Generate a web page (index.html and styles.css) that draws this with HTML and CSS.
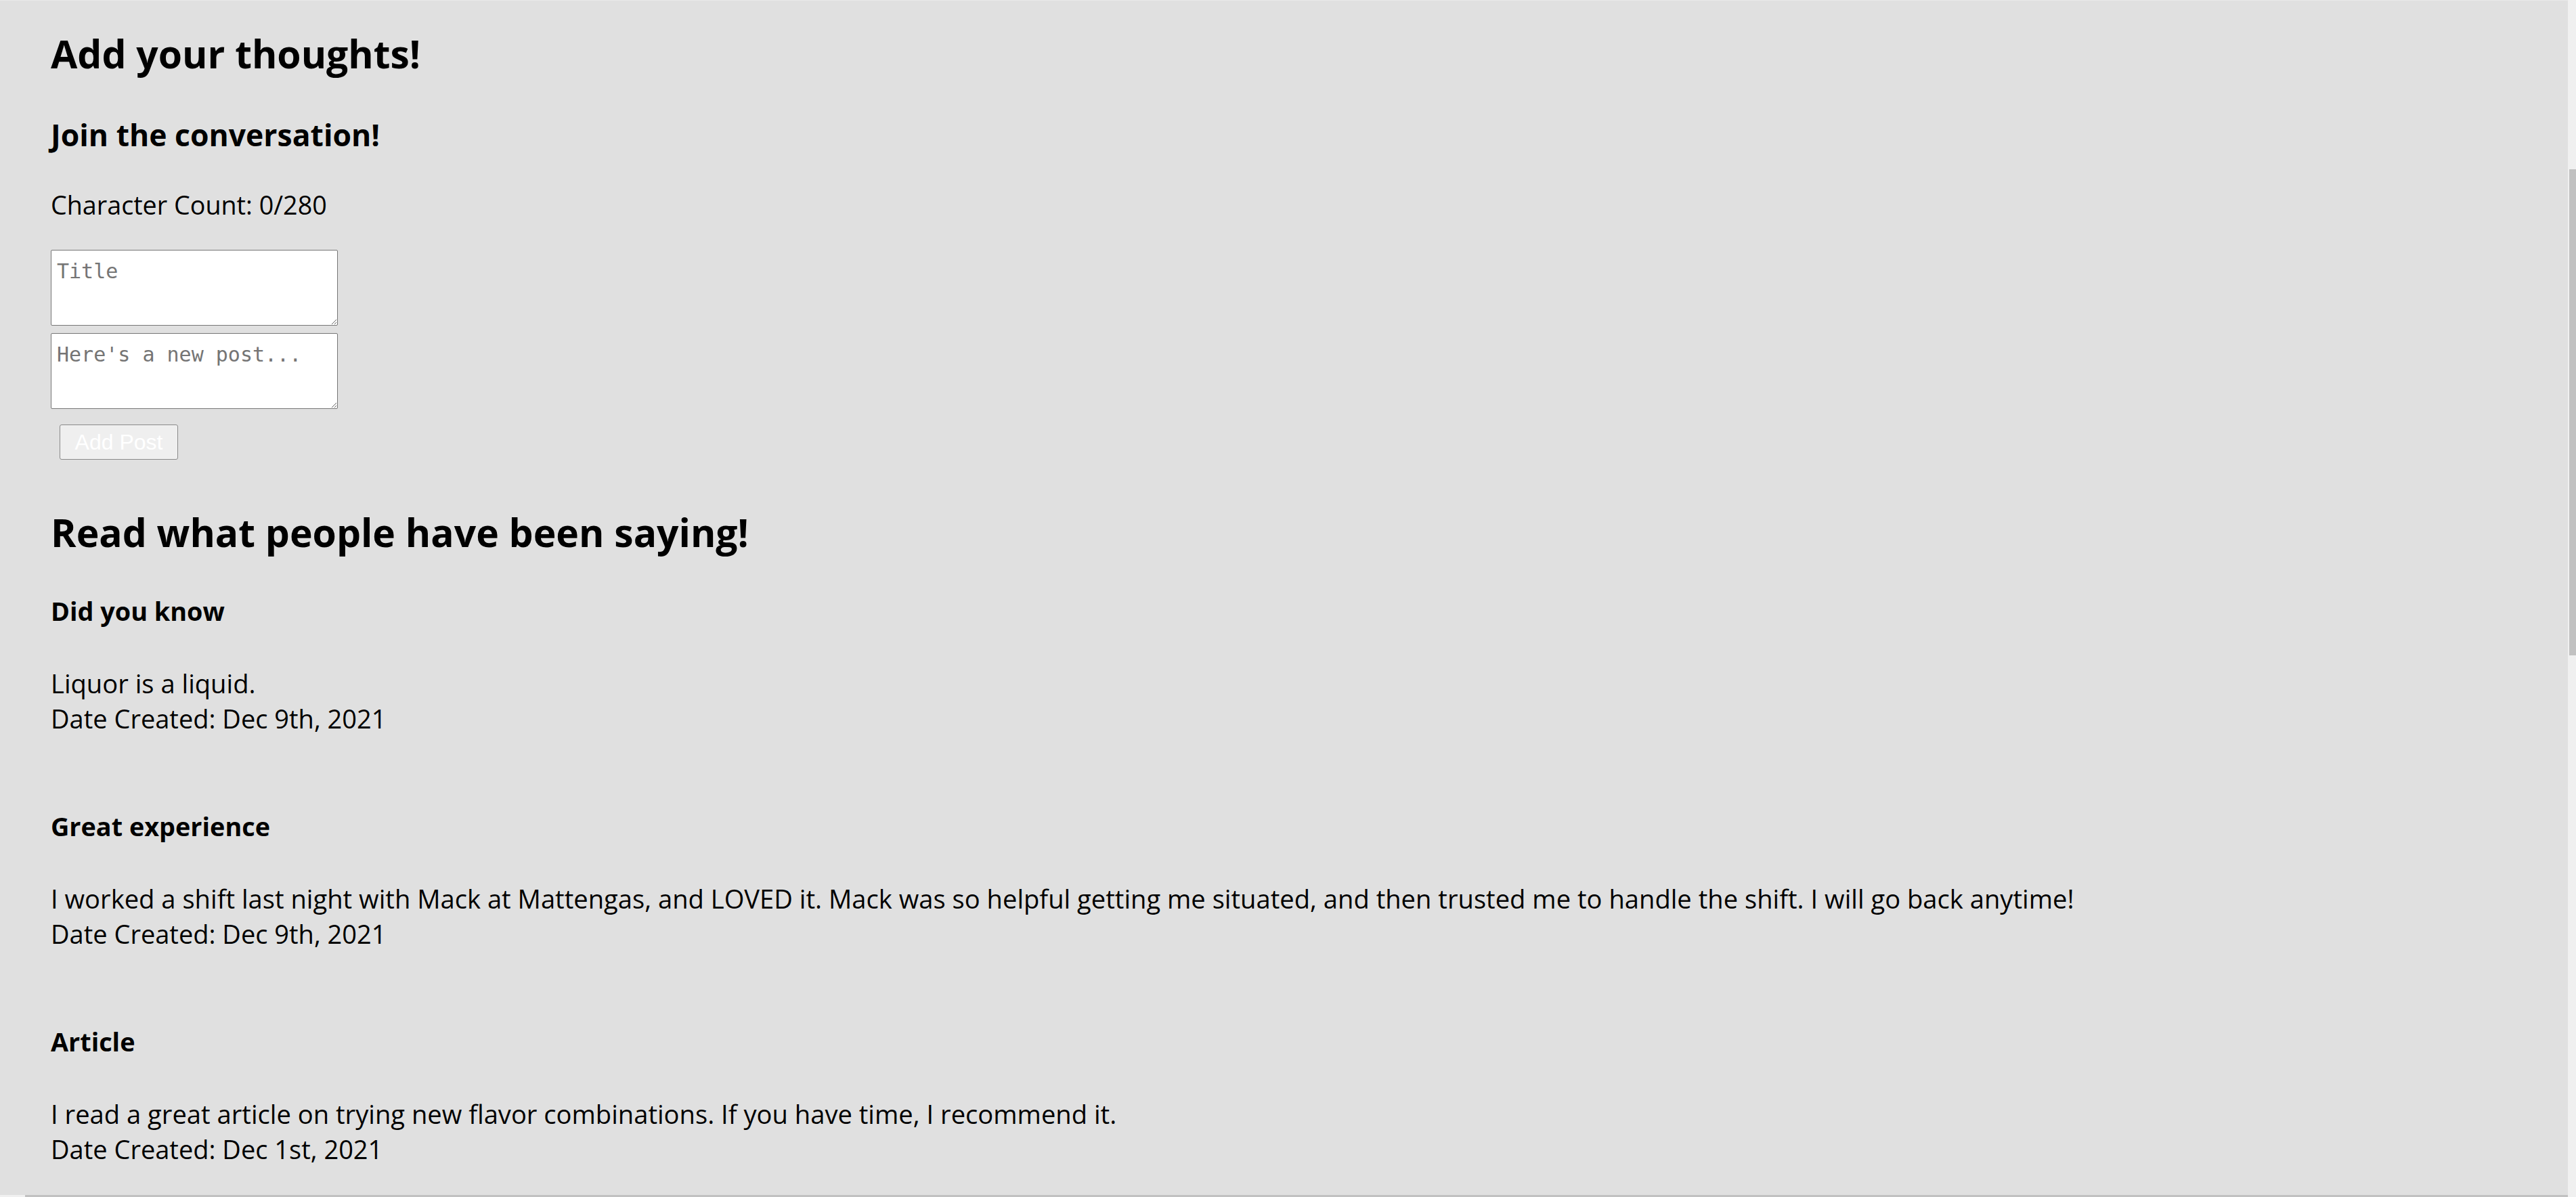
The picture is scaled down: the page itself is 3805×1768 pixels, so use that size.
FILE: index.html
```html
<!DOCTYPE html>
<html lang="en">
<head>
<meta charset="utf-8">
<title>Add your thoughts!</title>
<link rel="stylesheet" href="styles.css">
</head>
<body>
<div class="page">
  <main class="content">
    <h1 class="heading">Add your thoughts!</h1>
    <h2 class="subheading">Join the conversation!</h2>
    <p class="count">Character Count: 0/280</p>
    <form class="post-form">
      <textarea class="field" placeholder="Title"></textarea>
      <textarea class="field field-second" placeholder="Here's a new post..."></textarea>
      <button class="add-btn" type="button" disabled>Add Post</button>
    </form>
    <h1 class="heading heading-read">Read what people have been saying!</h1>
    <section class="posts">
      <article class="post">
        <h4 class="post-title">Did you know</h4>
        <p class="post-body">Liquor is a liquid.</p>
        <p class="post-date">Date Created: Dec 9th, 2021</p>
      </article>
      <article class="post">
        <h4 class="post-title">Great experience</h4>
        <p class="post-body">I worked a shift last night with Mack at Mattengas, and LOVED it. Mack was so helpful getting me situated, and then trusted me to handle the shift. I will go back anytime!</p>
        <p class="post-date">Date Created: Dec 9th, 2021</p>
      </article>
      <article class="post">
        <h4 class="post-title">Article</h4>
        <p class="post-body">I read a great article on trying new flavor combinations. If you have time, I recommend it.</p>
        <p class="post-date">Date Created: Dec 1st, 2021</p>
      </article>
    </section>
  </main>
</div>
<div class="vscroll"><div class="vthumb"></div></div>
<div class="hscroll"><div class="hcorner"></div><div class="hthumb"></div></div>
</body>
</html>
```

FILE: styles.css
```css
html, body {
  margin: 0;
  padding: 0;
}
body {
  background: #e0e0e0;
  color: #000;
  font-family: "Open Sans", "Noto Sans", sans-serif;
  overflow: hidden;
  height: 1768px;
}
.page {
  border-top: 1px solid #e9e9e9;
}
.content {
  padding: 43px 0 0 75px;
}
.heading {
  margin: 0;
  font-size: 57px;
  line-height: 70px;
  font-weight: 700;
}
.heading-read {
  margin-top: 72px;
}
.subheading {
  margin: 57px 0 0;
  font-size: 44.5px;
  line-height: 56px;
  font-weight: 700;
}
.count {
  margin: 50px 0 0;
  font-size: 37.7px;
  line-height: 52px;
}
.post-form {
  margin-top: 40px;
}
.field {
  display: block;
  box-sizing: border-box;
  width: 424px;
  height: 112px;
  margin: 0;
  padding: 13px 8px;
  border: 1px solid #767676;
  border-radius: 2px;
  background: #fff;
  font-family: "DejaVu Sans Mono", "Liberation Mono", monospace;
  font-size: 30px;
  line-height: 36px;
  color: #000;
}
.field::placeholder {
  color: #757575;
}
.field-second {
  margin-top: 11px;
}
.add-btn {
  display: block;
  box-sizing: border-box;
  margin: 23px 0 0 13px;
  width: 175px;
  height: 52px;
  padding: 0;
  border: 1px solid #8a8a8a;
  border-radius: 3px;
  background: #efefef;
  color: #fff;
  font-family: "Liberation Sans", Arial, sans-serif;
  font-size: 32px;
  line-height: 50px;
}
.posts {
  margin-top: 56px;
}
.post + .post {
  margin-top: 108px;
}
.post-title {
  margin: 0;
  font-size: 37.8px;
  line-height: 52px;
  font-weight: 700;
}
.post-body {
  margin: 54px 0 0;
  font-size: 38.15px;
  line-height: 52px;
}
.post-date {
  margin: 0;
  font-size: 38px;
  line-height: 52px;
}
.vscroll {
  position: fixed;
  top: 0;
  right: 0;
  width: 12px;
  height: 100%;
  background: #f0f0f0;
}
.vthumb {
  position: absolute;
  top: 250px;
  left: 2px;
  right: 0;
  height: 718px;
  background: #c1c1c1;
}
.hscroll {
  position: fixed;
  left: 0;
  right: 12px;
  bottom: 0;
  height: 3px;
  display: flex;
}
.hcorner {
  width: 37px;
  background: #f0f0f0;
}
.hthumb {
  flex: 1;
  background: #c1c1c1;
}
```
